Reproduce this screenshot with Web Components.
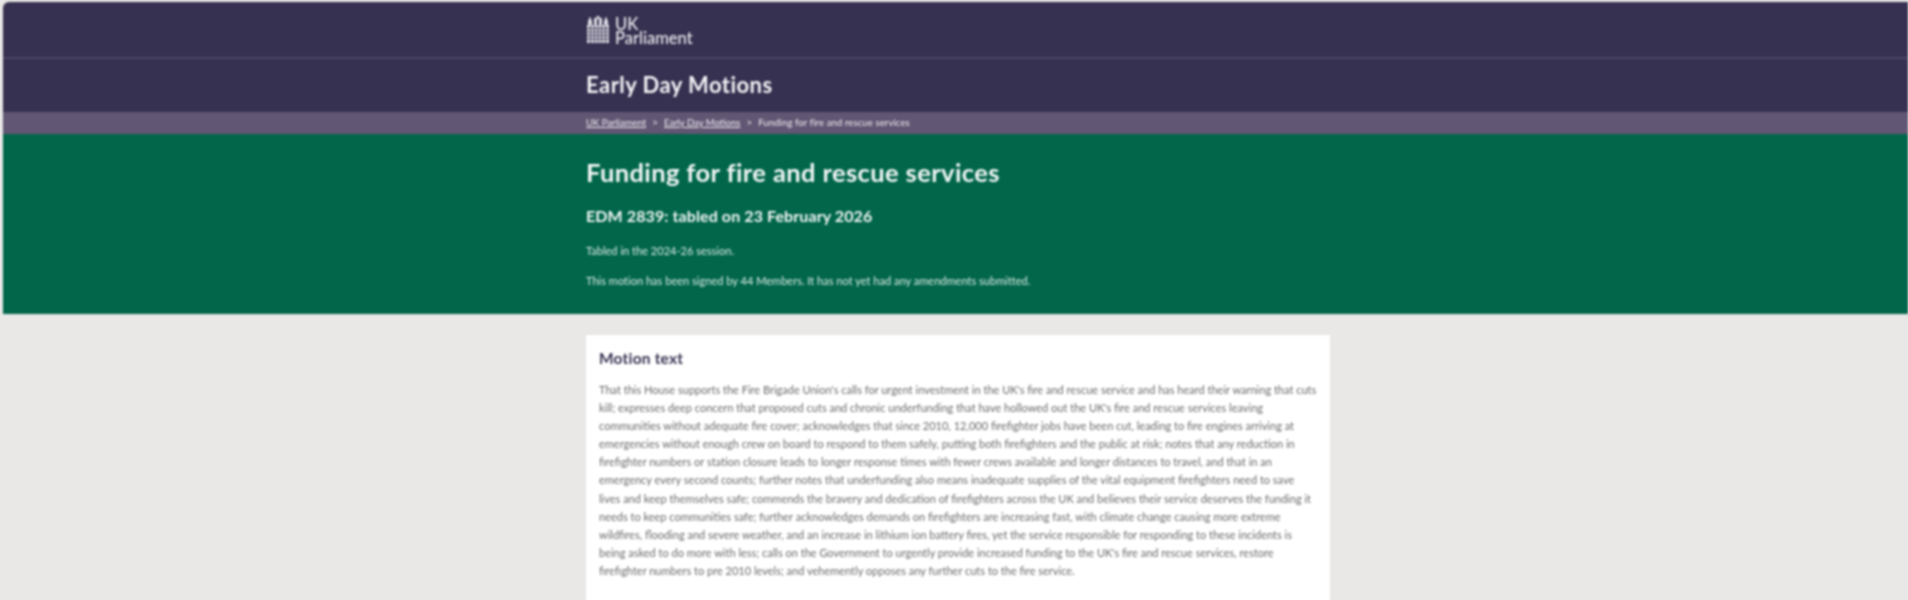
<!DOCTYPE html>
<html lang="en">
<head>
<meta charset="utf-8">
<title>Funding for fire and rescue services</title>
<style>
	html, body { margin: 0; background: #e9e8e6; }
	body { height: 600px; overflow: hidden; padding: 2px 0 0 3px; box-sizing: border-box; font-family: "Lato", "Liberation Sans", sans-serif; }
	.page { display: block; border-radius: 6px 0 0 0; overflow: hidden; filter: blur(.8px); }
</style>
</head>
<body>
<div class="page">
	<site-header title="Early Day Motions"></site-header>
	<bread-crumbs>
		<a>UK Parliament</a>
		<a>Early Day Motions</a>
		<span>Funding for fire and rescue services</span>
	</bread-crumbs>
	<edm-banner heading="Funding for fire and rescue services" sub="EDM 2839: tabled on 23 February 2026">
		<p>Tabled in the 2024-26 session.</p>
		<p>This motion has been signed by 44 Members. It has not yet had any amendments submitted.</p>
	</edm-banner>
	<motion-card heading="Motion text">
		<span>That this House supports the Fire Brigade Union's calls for urgent investment in the UK's fire and rescue service and has heard their warning that cuts</span>
		<span>kill; expresses deep concern that proposed cuts and chronic underfunding that have hollowed out the UK's fire and rescue services leaving</span>
		<span>communities without adequate fire cover; acknowledges that since 2010, 12,000 firefighter jobs have been cut, leading to fire engines arriving at</span>
		<span>emergencies without enough crew on board to respond to them safely, putting both firefighters and the public at risk; notes that any reduction in</span>
		<span>firefighter numbers or station closure leads to longer response times with fewer crews available and longer distances to travel, and that in an</span>
		<span>emergency every second counts; further notes that underfunding also means inadequate supplies of the vital equipment firefighters need to save</span>
		<span>lives and keep themselves safe; commends the bravery and dedication of firefighters across the UK and believes their service deserves the funding it</span>
		<span>needs to keep communities safe; further acknowledges demands on firefighters are increasing fast, with climate change causing more extreme</span>
		<span>wildfires, flooding and severe weather, and an increase in lithium ion battery fires, yet the service responsible for responding to these incidents is</span>
		<span>being asked to do more with less; calls on the Government to urgently provide increased funding to the UK's fire and rescue services, restore</span>
		<span>firefighter numbers to pre 2010 levels; and vehemently opposes any further cuts to the fire service.</span>
	</motion-card>
</div>

<script>
	class SiteHeader extends HTMLElement {
		constructor() {
			super();
			const title = this.getAttribute('title');
			this._root = this.attachShadow({mode: 'open'});
			this._root.innerHTML = `
				<style>
					:host { display: block; background: #373151; color: #fff; }
					.logo { display: flex; align-items: center; gap: 6px; height: 55px; padding-left: 584px; border-bottom: 2px solid #4a4466; }
					.logo svg { display: block; }
					.word { font-size: 16.5px; line-height: 14px; font-weight: 500; color: #eeedf1; padding-top: 2px; }
					.word div { height: 14px; }
					.title { display: flex; align-items: center; height: 51px; padding: 0 0 2px 583px; font-size: 22px; font-weight: 700; letter-spacing: .45px; color: #f4f3f6; }
				</style>
				<div class="logo">
					<svg width="22" height="27" viewBox="0 0 22 27" fill="#dcdbe2">
						<path d="M0 9h22v18H0z"/>
						<path d="M1 4h4v5H1zM7 2h3v7H7zM12 2h3v7h-3zM17 4h4v5h-4z"/>
						<path d="M9.5 0h3v3h-3zM2 1.5h2V4H2zM18 1.5h2V4h-2z"/>
						<path d="M0 12.5h22M0 16h22M0 19.5h22M0 23h22M3.5 9v18M7.3 9v18M11 9v18M14.7 9v18M18.5 9v18" stroke="#373151" stroke-width=".9"/>
					</svg>
					<div class="word"><div>UK</div><div>Parliament</div></div>
				</div>
				<div class="title">${title}</div>
			`;
		}
	}

	class BreadCrumbs extends HTMLElement {
		constructor() {
			super();
			this._root = this.attachShadow({mode: 'open'});
			this._root.innerHTML = `
				<style>
					:host { display: flex; align-items: center; gap: 6px; height: 20px; padding: 0 0 2px 583px; background: #615673; color: #f1f0f3; font-size: 9.5px; }
					::slotted(a) { text-decoration: underline; }
					::slotted(span) { letter-spacing: .12px; }
				</style>
				<slot></slot>
			`;
		}
		connectedCallback() {
			/*put the chevrons between the crumbs*/
			const items = Array.from(this.children);
			items.slice(0, -1).forEach(function(item) {
				const sep = document.createElement('b');
				sep.textContent = '>';
				sep.style.fontWeight = 'normal';
				sep.style.fontSize = '10px';
				item.after(sep);
			});
		}
	}

	class EdmBanner extends HTMLElement {
		constructor() {
			super();
			this._root = this.attachShadow({mode: 'open'});
			this._root.innerHTML = `
				<style>
					:host { display: block; background: #01664a; color: #fff; height: 180px; padding: 22px 0 0 583px; box-sizing: border-box; }
					h1 { margin: 0; font-size: 25.5px; line-height: 32px; font-weight: 700; letter-spacing: .38px; color: #f2f7f5; }
					h2 { margin: 16.5px 0 18.5px; font-size: 16px; line-height: 22px; font-weight: 700; letter-spacing: .1px; color: #f2f7f5; }
					::slotted(p) { margin: 0 0 18px; font-size: 11px; line-height: 12px; letter-spacing: .02px; color: #dcebe5; }
				</style>
				<h1>${this.getAttribute('heading')}</h1>
				<h2>${this.getAttribute('sub')}</h2>
				<slot></slot>
			`;
		}
	}

	class MotionCard extends HTMLElement {
		constructor() {
			super();
			this._root = this.attachShadow({mode: 'open'});
			this._root.innerHTML = `
				<style>
					:host { display: block; width: 744px; margin: 21px 0 0 583px; padding: 12px 13px 40px; box-sizing: border-box; background: #fff; }
					h3 { margin: 0 0 12px; font-size: 15.5px; line-height: 22px; font-weight: 700; letter-spacing: .2px; color: #373151; }
					.text { font-size: 11px; line-height: 18.1px; color: #6a6a6a; }
					::slotted(span) { display: block; white-space: nowrap; }
				</style>
				<h3>${this.getAttribute('heading')}</h3>
				<div class="text"><slot></slot></div>
			`;
		}
	}

	window.customElements.define('site-header', SiteHeader);
	window.customElements.define('bread-crumbs', BreadCrumbs);
	window.customElements.define('edm-banner', EdmBanner);
	window.customElements.define('motion-card', MotionCard);
</script>
</body>
</html>
